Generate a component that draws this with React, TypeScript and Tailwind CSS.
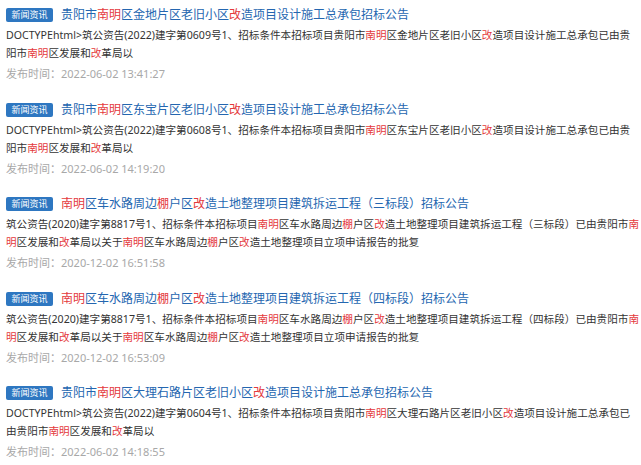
import React from "react";

type Item = {
  title: string;
  lines: string[];
  date: string;
};

const items: Item[] = [
  {
    title: "贵阳市{南明}区金地片区老旧小区{改}造项目设计施工总承包招标公告",
    lines: [
      "DOCTYPEhtml>筑公资告(2022)建字第0609号1、招标条件本招标项目贵阳市{南明}区金地片区老旧小区{改}造项目设计施工总承包已由贵",
      "阳市{南明}区发展和{改}革局以",
    ],
    date: "2022-06-02 13:41:27",
  },
  {
    title: "贵阳市{南明}区东宝片区老旧小区{改}造项目设计施工总承包招标公告",
    lines: [
      "DOCTYPEhtml>筑公资告(2022)建字第0608号1、招标条件本招标项目贵阳市{南明}区东宝片区老旧小区{改}造项目设计施工总承包已由贵",
      "阳市{南明}区发展和{改}革局以",
    ],
    date: "2022-06-02 14:19:20",
  },
  {
    title: "{南明}区车水路周边{棚}户区{改}造土地整理项目建筑拆运工程（三标段）招标公告",
    lines: [
      "筑公资告(2020)建字第8817号1、招标条件本招标项目{南明}区车水路周边{棚}户区{改}造土地整理项目建筑拆运工程（三标段）已由贵阳市{南}",
      "{明}区发展和{改}革局以关于{南明}区车水路周边{棚}户区{改}造土地整理项目立项申请报告的批复",
    ],
    date: "2020-12-02 16:51:58",
  },
  {
    title: "{南明}区车水路周边{棚}户区{改}造土地整理项目建筑拆运工程（四标段）招标公告",
    lines: [
      "筑公资告(2020)建字第8817号1、招标条件本招标项目{南明}区车水路周边{棚}户区{改}造土地整理项目建筑拆运工程（四标段）已由贵阳市{南}",
      "{明}区发展和{改}革局以关于{南明}区车水路周边{棚}户区{改}造土地整理项目立项申请报告的批复",
    ],
    date: "2020-12-02 16:53:09",
  },
  {
    title: "贵阳市{南明}区大理石路片区老旧小区{改}造项目设计施工总承包招标公告",
    lines: [
      "DOCTYPEhtml>筑公资告(2022)建字第0604号1、招标条件本招标项目贵阳市{南明}区大理石路片区老旧小区{改}造项目设计施工总承包已",
      "由贵阳市{南明}区发展和{改}革局以",
    ],
    date: "2022-06-02 14:18:55",
  },
];

function hl(s: string) {
  const parts = s.split(/(\{[^}]+\})/);
  return parts.map((p, i) =>
    p.startsWith("{") ? (
      <span key={i} className="text-[#e4393c]">
        {p.slice(1, -1)}
      </span>
    ) : (
      <React.Fragment key={i}>{p}</React.Fragment>
    )
  );
}

export default function App() {
  return (
    <div
      className="w-[641px] h-[465px] bg-white overflow-hidden"
      style={{ fontFamily: '"Noto Sans", "Noto Sans CJK SC", sans-serif' }}
    >
      {items.map((it, idx) => (
        <div key={idx} className="pl-[6px] pt-[5px] pb-[10.5px]">
          <div className="flex items-center gap-[8px] h-[20px] whitespace-nowrap">
            <span className="bg-[#2e77c1] text-white text-[9px] leading-[14px] h-[14px] px-[5.5px] rounded-[2px]">
              新闻资讯
            </span>
            <span className="text-[12px] leading-[20px] text-[#2466b0]">{hl(it.title)}</span>
          </div>
          <div className="mt-[1px] text-[10.6px] leading-[18px] text-[#333333]">
            {it.lines.map((l, i) => (
              <div key={i} className="whitespace-nowrap">
                {hl(l)}
              </div>
            ))}
          </div>
          <div className="mt-[2px] text-[11px] leading-[20px] text-[#a8a8a8] whitespace-nowrap">
            发布时间：{it.date}
          </div>
        </div>
      ))}
    </div>
  );
}
